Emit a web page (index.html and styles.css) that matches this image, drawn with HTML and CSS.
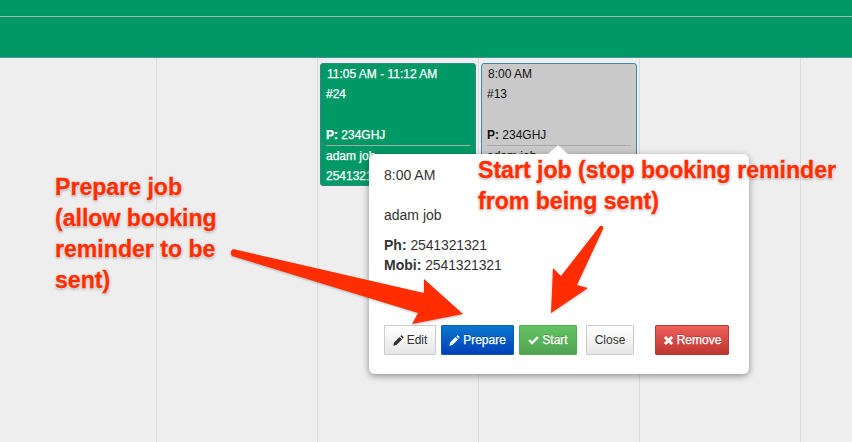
FILE: index.html
```html
<!DOCTYPE html>
<html lang="en">
<head>
<meta charset="utf-8">
<title>Job calendar</title>
<link rel="stylesheet" href="styles.css">
</head>
<body>
<div class="page">
  <header class="topbar">
    <div class="topbar-row topbar-row-a"></div>
    <div class="topbar-row topbar-row-b"></div>
  </header>
  <main class="calendar">
    <div class="col col-first"></div>
    <div class="col"></div>
    <div class="col">
      <article class="job job-green">
        <div class="job-time">11:05 AM - 11:12 AM</div>
        <div class="job-num">#24</div>
        <div class="job-plate"><b>P:</b> 234GHJ</div>
        <div class="job-name">adam job</div>
        <div class="job-phone">2541321321</div>
      </article>
    </div>
    <div class="col">
      <article class="job job-grey">
        <div class="job-time">8:00 AM</div>
        <div class="job-num">#13</div>
        <div class="job-plate"><b>P:</b> 234GHJ</div>
        <div class="job-name">adam job</div>
        <div class="job-phone">2541321321</div>
      </article>
    </div>
    <div class="col"></div>
    <div class="col"></div>
  </main>

  <section class="popover">
    <div class="popover-arrow"></div>
    <p class="pop-time">8:00 AM</p>
    <p class="pop-name">adam job</p>
    <p class="pop-phone"><b>Ph:</b> <span class="digits">2541321321</span></p>
    <p class="pop-phone"><b>Mobi:</b> <span class="digits">2541321321</span></p>
    <div class="pop-actions">
      <button class="btn btn-default"><svg class="ico" viewBox="0 0 12 12"><path d="M0.4 11.6l0.7-3.4 6-6 2.7 2.7-6 6zM8 1.4l0.7-0.7c0.4-0.4 0.9-0.4 1.3 0l1.3 1.3c0.4 0.4 0.4 0.9 0 1.3l-0.7 0.7z"/></svg>Edit</button>
      <button class="btn btn-blue"><svg class="ico" viewBox="0 0 12 12"><path d="M0.4 11.6l0.7-3.4 6-6 2.7 2.7-6 6zM8 1.4l0.7-0.7c0.4-0.4 0.9-0.4 1.3 0l1.3 1.3c0.4 0.4 0.4 0.9 0 1.3l-0.7 0.7z"/></svg>Prepare</button>
      <button class="btn btn-green"><svg class="ico" viewBox="0 0 12 12"><path d="M0.2 6.3l1.8-1.8 2.4 2.4 5.6-5.6 1.8 1.8-7.4 7.4z"/></svg>Start</button>
      <button class="btn btn-default btn-close">Close</button>
      <button class="btn btn-red"><svg class="ico ico-x" viewBox="0 0 12 12"><path d="M1 3.2l2.2-2.2 2.8 2.8 2.8-2.8 2.2 2.2-2.8 2.8 2.8 2.8-2.2 2.2-2.8-2.8-2.8 2.8-2.2-2.2 2.8-2.8z"/></svg>Remove</button>
    </div>
  </section>

  <svg class="arrows" viewBox="0 0 852 442" aria-hidden="true">
    <path class="arrow" d="M233 249L424 293L424 279L463 314L412 324L418 313L232 256Q229 252 233 249Z"/>
    <path class="arrow" d="M600 226Q604 225 603 229L577 285L588 288L551 313L553 268L561 276Z"/>
  </svg>

  <div class="note note-prepare">Prepare job<br>(allow booking<br>reminder to be<br>sent)</div>
  <div class="note note-start">Start job (stop booking reminder<br>from being sent)</div>
</div>
</body>
</html>
```
FILE: styles.css
```css
* { box-sizing: border-box; }
html, body { margin: 0; padding: 0; }
body {
  width: 852px;
  height: 442px;
  overflow: hidden;
  background: #eeeeee;
  font-family: "Liberation Sans", Arial, sans-serif;
  color: #333333;
}
.page { position: relative; width: 852px; height: 442px; overflow: hidden; }

.topbar { background: #009966; border-bottom: 1px solid #4a8f9a; height: 58px; }
.topbar-row-a { height: 17px; border-bottom: 1px solid #a9b3ae; }

.calendar { display: flex; height: 384px; }
.col {
  flex: 0 0 161px;
  border-right: 1px solid #dcdcdc;
  padding: 5px 2px 0 2px;
}
.col-first { flex-basis: 157px; }

.job {
  width: 156px;
  height: 123px;
  padding: 0 5px;
  border: 1px solid #337ab7;
  border-radius: 3px;
  font-size: 12px;
  line-height: 20px;
}
.job-green {
  background: #009966;
  color: #ffffff;
  border-color: #2a8a88;
  -webkit-text-stroke: 0.25px #ffffff;
}
.job-grey { background: #c9c9c9; color: #111111; border-color: #3f86b8; }
.job-time { padding-left: 1px; }
.job-num { margin-bottom: 21px; }
.job-plate { height: 21px; border-bottom: 1px solid #a8a8a8; }
.job-plate b { font-weight: bold; }

.popover {
  position: absolute;
  left: 369px;
  top: 154px;
  width: 380px;
  height: 220px;
  padding: 11px 15px 0 15px;
  background: #ffffff;
  border-radius: 6px;
  box-shadow: 0 2px 7px rgba(0, 0, 0, 0.4);
  font-size: 14px;
  line-height: 20px;
}
.popover-arrow {
  position: absolute;
  left: 179px;
  top: -9px;
  width: 0;
  height: 0;
  border-left: 10px solid transparent;
  border-right: 10px solid transparent;
  border-bottom: 9px solid #ffffff;
}
.popover p { margin: 0; }
.popover .pop-time { margin-bottom: 20px; }
.popover .pop-name { margin-bottom: 10px; }
.digits { letter-spacing: -0.15px; }

.pop-actions { display: flex; margin-top: 50px; }
.btn {
  display: inline-flex;
  align-items: center;
  justify-content: center;
  height: 30px;
  padding: 0;
  margin-right: 5px;
  border: 1px solid #cccccc;
  border-radius: 1px;
  font-family: inherit;
  font-size: 12px;
  color: #333333;
  background: linear-gradient(#ffffff, #e6e6e6);
}
.ico { width: 11px; height: 11px; margin-right: 3px; fill: currentColor; }
.btn-default { width: 52px; }
.btn-blue, .btn-green, .btn-red {
  color: #fff;
  text-shadow: 0 -1px 0 rgba(0,0,0,.2);
  -webkit-text-stroke: 0.25px #ffffff;
}
.btn-blue {
  width: 73px;
  border-color: #0a5cab;
  background: linear-gradient(#0a77cf, #0040b8);
}
.btn-green {
  width: 58px;
  margin-right: 9px;
  border-color: #4cae4c;
  background: linear-gradient(#62c462, #51a351);
}
.btn-close { width: 48px; margin-right: 21px; }
.btn-red {
  width: 74px;
  margin-right: 0;
  border-color: #b83a36;
  background: linear-gradient(#ee5f5b, #bd362f);
}

.arrows { position: absolute; left: 0; top: 0; width: 852px; height: 442px; pointer-events: none; }
.arrow { fill: #ff2d00; filter: drop-shadow(0 1px 1px rgba(0,0,0,.25)); }

.note {
  position: absolute;
  font-size: 23.1px;
  font-weight: bold;
  line-height: 31px;
  color: #ff2d00;
  -webkit-text-stroke: 0.4px #ff2d00;
  text-shadow: 0 0 2px #fff, 0 0 2px #fff, 0 0 2px #fff, 0 1px 3px rgba(0,0,0,.5);
}
.note-prepare { left: 55px; top: 172px; }
.note-start { left: 478px; top: 155px; white-space: nowrap; }
```
